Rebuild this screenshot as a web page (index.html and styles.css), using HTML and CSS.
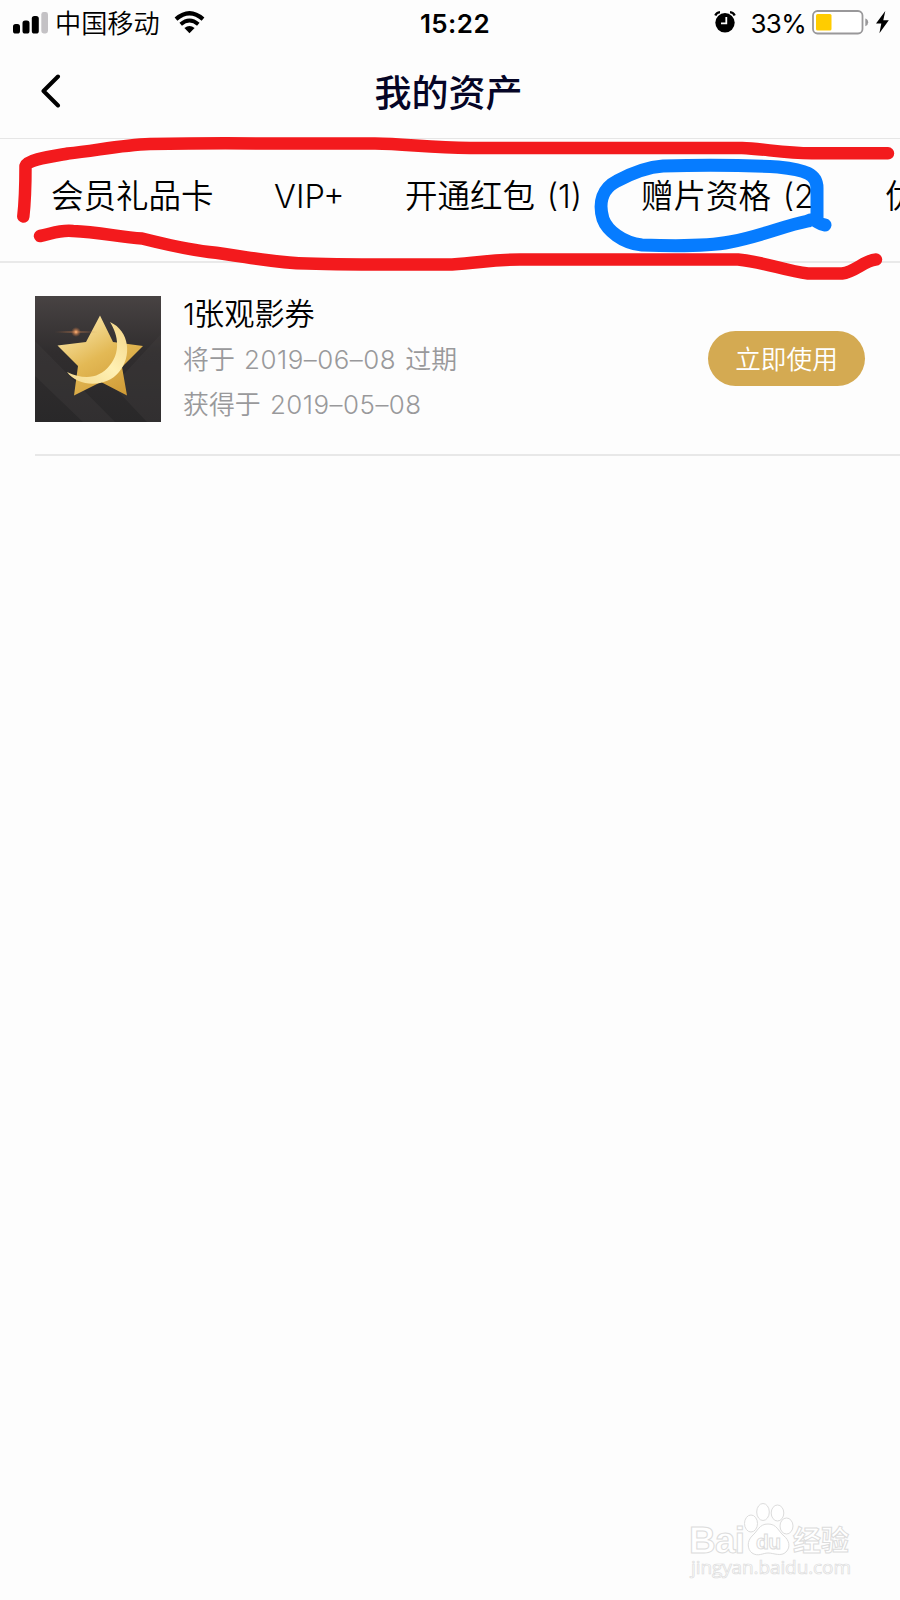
FILE: index.html
```html
<!DOCTYPE html>
<html lang="zh-CN">
<head>
<meta charset="utf-8">
<title>我的资产</title>
<link rel="stylesheet" href="styles.css">
</head>
<body>
<div class="screen">
  <div class="status">
    <div class="status-left">
      <svg class="signal" width="35" height="23" viewBox="0 0 35 23"><rect x="0" y="13" width="7" height="9.5" rx="2.6"/><rect x="9.5" y="9.5" width="7" height="13" rx="2.6"/><rect x="18.8" y="5" width="7" height="17.5" rx="2.6"/><rect x="28.3" y="1" width="6.7" height="21.5" rx="2.4" fill="#c4c2c5"/></svg>
      <span class="carrier">中国移动</span>
      <svg class="wifi" width="31" height="23" viewBox="0 0 31 23"><path d="M2 8.2Q15.500 -3.600 29 8.200" fill="none" stroke="#000" stroke-width="4.200"/><path d="M6.700 13.300Q15.500 5.600 24.300 13.300" fill="none" stroke="#000" stroke-width="3.800"/><path d="M10.400 17Q15.500 12.800 20.600 17L15.500 22.300Z"/></svg>
    </div>
    <div class="time">15:22</div>
    <div class="status-right">
      <svg class="alarm" width="22" height="22" viewBox="0 0 22 22"><circle cx="11" cy="11.800" r="9.700"/><path d="M1.300 4.500Q2.500 1.500 6 1.200M20.700 4.500Q19.500 1.500 16 1.200" fill="none" stroke="#000" stroke-width="2.300"/><path d="M12.300 6V12.300H7" fill="none" stroke="#fff" stroke-width="1.800"/></svg>
      <span class="percent">33%</span>
      <svg class="battery" width="57" height="25" viewBox="0 0 57 25"><rect x="1" y="1" width="49.500" height="22.500" rx="4.500" fill="#fff" stroke="#99989a" stroke-width="1.800"/><rect x="4" y="4" width="15.500" height="16.500" rx="1.500" fill="#fc0"/><path d="M53.300 8.500Q56.200 9.500 56.200 12.300T53.300 16.200Z" fill="#99989a"/></svg>
      <svg class="bolt" width="13" height="23" viewBox="0 0 13 23"><path d="M9.300 0L0 12.600H5.300L3.400 22.300L12.800 9.300H7.300Z"/></svg>
    </div>
  </div>
  <header class="navbar">
    <svg class="back" width="20" height="34" viewBox="0 0 20 34"><path d="M17 2.500L2.500 17L17 31.500" fill="none" stroke="#000" stroke-width="4" stroke-linecap="round" stroke-linejoin="round"/></svg>
    <h1 class="title">我的资产</h1>
  </header>
  <nav class="tabs">
    <span class="tab tab-card">会员礼品卡</span>
    <span class="tab tab-vip">VIP+</span>
    <span class="tab tab-packet">开通红包 (1)</span>
    <span class="tab tab-gift">赠片资格 (2)</span>
    <span class="tab tab-coupon">优</span>
    <svg class="marks" width="900" height="160" viewBox="0 130 900 160" fill="none" stroke-linecap="round" stroke-linejoin="round" stroke-width="12.500">
      <path stroke="#f31a1d" d="M23.300 216.500C25 202 25.500 184 25.500 166C27 160 48 157 68 153.500C95 151 120 145 150 144Q210 143 260 143.500H375C405 144 430 147.500 470 148H742C765 149 783 153 812 153.300H888"/>
      <path stroke="#f31a1d" d="M40 236C51 234 60 229.500 73 231C98 232 120 237 142 238.500C164 244 185 249 209 252C245 256 272 263 307 263.500C355 265 405 264.500 452 264.500C480 263 490 259.500 520 259.500H738C765 262 785 271 808 273.500H842C855 272 865 260 876 259.500"/>
      <path stroke="#067cff" stroke-width="13" d="M825 225C817 224 815 217 808 221C783 226 762 236 730 242C705 247 670 246 642 245C622 243 607 230 603 219C598 202 603 188 617 181C632 173 648 167 663 166C700 165 740 165 778 167C806 170 817 174 817 188V219"/>
    </svg>
  </nav>
  <main>
    <article class="item">
      <svg class="thumb" width="126" height="126" viewBox="0 0 126 126">
        <defs>
          <linearGradient id="bg" x1="0" y1="0" x2="0" y2="1"><stop offset="0" stop-color="#484343"/><stop offset=".45" stop-color="#302d2e"/><stop offset="1" stop-color="#292829"/></linearGradient>
          <linearGradient id="gold" x1=".2" y1="0" x2=".8" y2="1"><stop offset="0" stop-color="#fbeab0"/><stop offset=".5" stop-color="#e3b955"/><stop offset="1" stop-color="#cf9a35"/></linearGradient>
          <linearGradient id="moon" x1="1" y1="0" x2="0" y2="1"><stop offset="0" stop-color="#f2d486"/><stop offset=".5" stop-color="#fff0b3"/><stop offset="1" stop-color="#f3d98e"/></linearGradient>
          <radialGradient id="flare"><stop offset="0" stop-color="#fff1d9"/><stop offset=".15" stop-color="#e69a62"/><stop offset="1" stop-color="#a56038" stop-opacity="0"/></radialGradient>
        </defs>
        <path fill="url(#bg)" d="M0 0H126V126H0Z"/>
        <path fill="#454142" opacity=".3" d="M0 45L80 126H48L0 80ZM126 38L78 90L112 126H126Z"/>
        <path fill="url(#gold)" d="M65 19.500L78 46L108 50L87 71L92 99.500L66 86L39 99.500L43 70L22.500 49.500L51 46Z"/>
        <path fill="url(#moon)" d="M75 26C95 35 97 61 84 76C71 92 43 91 32 76C49 84 64 83 75 69C85 57 84 40 75 26Z"/>
        <ellipse cx="41" cy="36" rx="25" ry="1" fill="url(#flare)" opacity=".6"/><circle cx="41" cy="36" r="5" fill="url(#flare)"/>
      </svg>
      <div class="info">
        <h2 class="name"><span class="count">1</span>张观影券</h2>
        <p class="date">将于 <span class="num">2019–06–08</span> 过期</p>
        <p class="date">获得于 <span class="num">2019–05–08</span></p>
      </div>
      <button class="use">立即使用</button>
    </article>
  </main>
  <svg class="watermark" width="240" height="120" viewBox="0 0 240 120" fill="#fff" stroke="#dcdcdc" stroke-width="1">
    <text class="wm-bold" x="29" y="73" font-size="37" textLength="56">Bai</text>
    <ellipse cx="91" cy="43.500" rx="6.500" ry="8.500"/><ellipse cx="103" cy="32" rx="6.300" ry="8.500"/><ellipse cx="117.500" cy="33" rx="6.300" ry="8"/><ellipse cx="126.500" cy="46" rx="6.500" ry="8"/>
    <path d="M108 44C99 44 98 51 92 56C87 61 87 69 92 73C98 77 103 73 108 73C114 73 121 77 126 72C131 67 129 60 124 56C118 51 117 44 108 44Z"/>
    <text class="wm-bold" x="96" y="69" font-size="21" textLength="25">du</text>
    <text class="wm-cn" x="133" y="71" font-size="28" textLength="56">经验</text>
    <text class="wm-url" x="31" y="94" font-size="19" textLength="160">jingyan.baidu.com</text>
  </svg>
</div>
</body>
</html>
```
FILE: styles.css
```css
* { box-sizing: border-box; }
body { margin: 0; }
.screen {
  position: relative;
  width: 900px;
  height: 1600px;
  overflow: hidden;
  background: #fdfdfd;
  color: #000;
  font-family: Inter, "Noto Sans CJK SC", sans-serif;
}
svg { display: block; flex: none; }
.status {
  display: grid;
  grid-template-columns: 1fr 1fr 1fr;
  align-items: center;
  height: 46px;
  padding: 0 11px 0 13px;
}
.status-left, .status-right { display: flex; align-items: center; }
.status-right { justify-content: flex-end; }
.carrier { margin: 2px 0 0 7px; font-size: 26.200px; line-height: 44px; font-weight: 350; white-space: nowrap; }
.wifi { margin: -2px 0 0 14px; }
.signal { margin-top: -2px; }
.time { padding-left: 8px; text-align: center; font-size: 26px; font-weight: 600; letter-spacing: .4px; }
.percent { margin-left: 14px; font-size: 26px; letter-spacing: -.7px; }
.battery { margin: -2px 0 0 6px; }
.bolt { margin: -2px 0 0 7px; }
.alarm { margin-top: -2px; }
.navbar {
  display: grid;
  grid-template-columns: 60px 1fr 60px;
  align-items: center;
  height: 93px;
  border-bottom: 1px solid #e6e6e6;
}
.back { justify-self: end; margin: -2px -1px 0 0; }
.title { margin: 0; padding: 3px 3px 0 0; text-align: center; font-size: 37px; line-height: 54px; font-weight: 500; color: #050526; }
.tabs {
  position: relative;
  display: flex;
  height: 124px;
  padding: 34px 0 0 51px;
  border-bottom: 2px solid #e9e9e9;
}
.tab { flex: none; font-size: 32.500px; line-height: 48px; font-weight: 350; word-spacing: 2.500px; white-space: nowrap; }
.tab-card { width: 223px; }
.tab-vip { width: 131px; }
.tab-packet { width: 236px; }
.tab-gift { width: 244px; }
.marks { position: absolute; left: 0; top: -9px; }
.item {
  display: flex;
  height: 193px;
  margin-left: 35px;
  padding: 33px 35px 0 0;
  border-bottom: 2px solid #e8e8e8;
}
.info { flex: 1; padding-left: 22px; }
.name { margin: -5px 0 0; font-size: 30.200px; line-height: 46px; font-weight: 350; }
.count { display: inline-block; width: 11px; }
.date { margin: 0; font-size: 25.900px; line-height: 45px; font-weight: 350; color: #99999b; word-spacing: 2px; }
.num { font-weight: 300; letter-spacing: .5px; }
.use {
  width: 157px;
  height: 55px;
  margin-top: 35px;
  padding: 2px 0 0;
  border: 0;
  border-radius: 28px;
  background: #d4aa52;
  color: #fff;
  font: 350 25.700px/53px Inter, "Noto Sans CJK SC", sans-serif;
}
.watermark { position: absolute; left: 660px; top: 1480px; }
.wm-bold { font-family: "Liberation Sans", sans-serif; font-weight: 700; }
.wm-cn { font-family: "Noto Sans CJK SC", sans-serif; font-weight: 700; }
.wm-url { font-family: "Open Sans", sans-serif; font-weight: 400; stroke-width: .7px; }
```
